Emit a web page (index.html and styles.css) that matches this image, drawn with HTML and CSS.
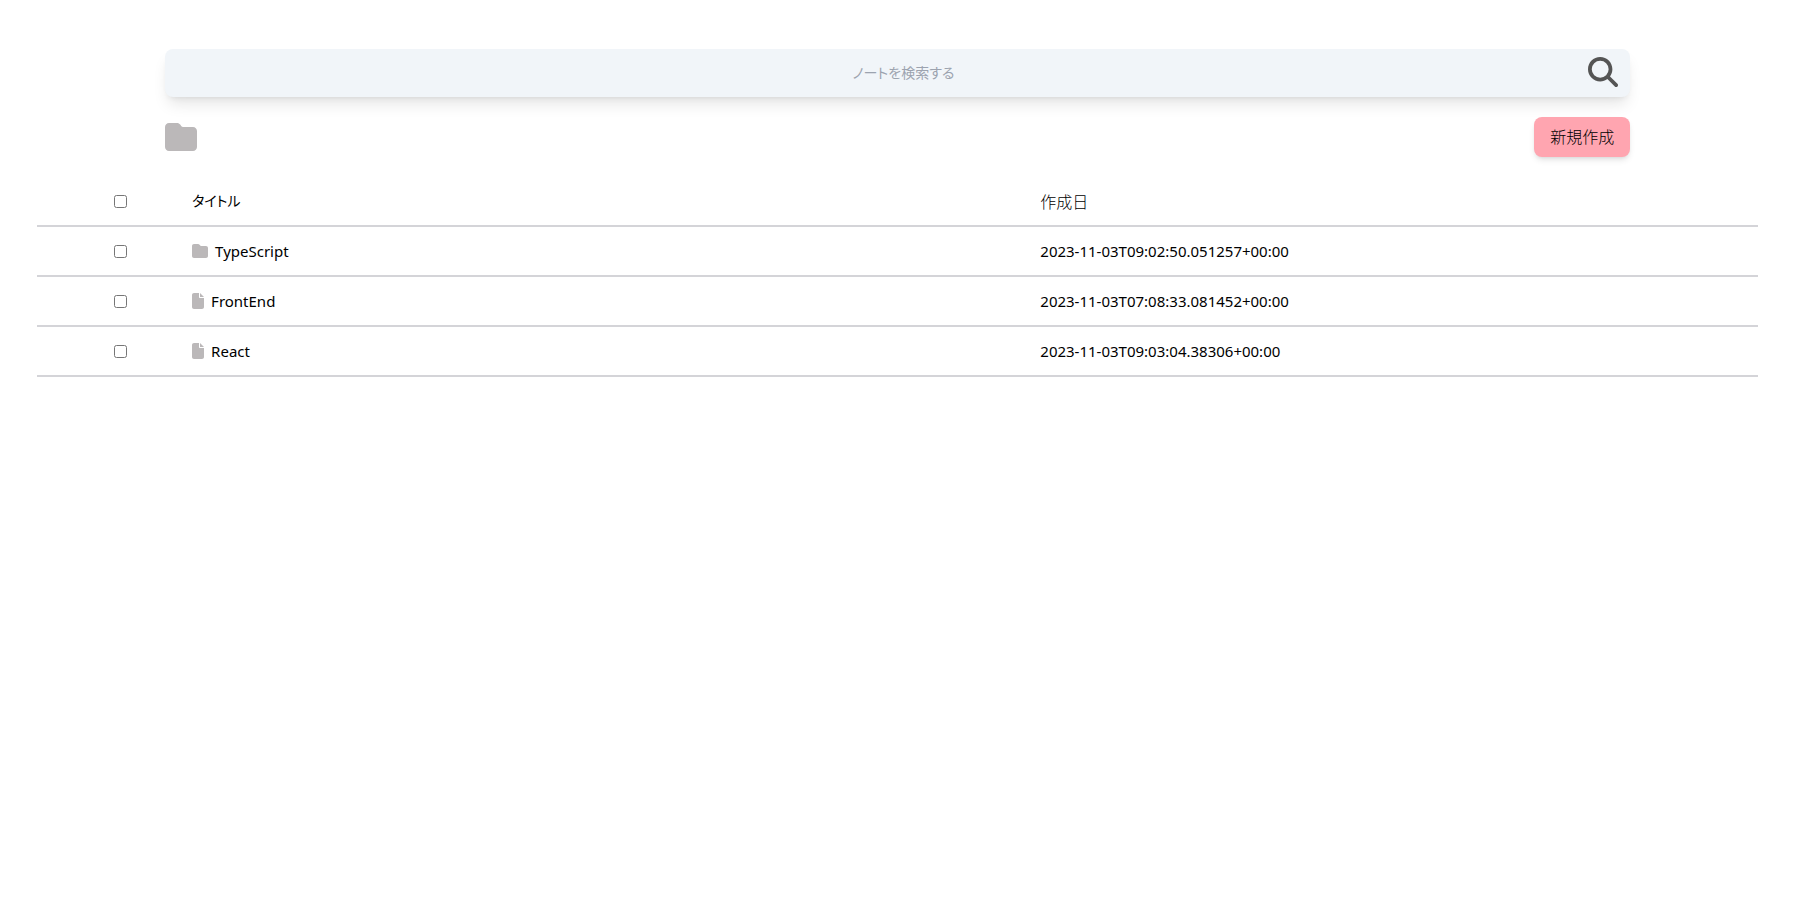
FILE: index.html
```html
<!DOCTYPE html>
<html lang="ja">
<head>
<meta charset="utf-8">
<title>ノート</title>
<link rel="stylesheet" href="styles.css">
</head>
<body>
<svg class="sprite" aria-hidden="true">
  <symbol id="folder" viewBox="0 0 512 512"><path d="M64 480H448c35.3 0 64-28.7 64-64V160c0-35.3-28.7-64-64-64H288c-10.1 0-19.6-4.7-25.6-12.8L243.2 57.6C231.1 41.5 212.1 32 192 32H64C28.7 32 0 60.7 0 96V416c0 35.3 28.7 64 64 64z"/></symbol>
  <symbol id="file" viewBox="0 0 384 512"><path d="M0 64C0 28.7 28.7 0 64 0H224V128c0 17.7 14.3 32 32 32H384V448c0 35.3-28.7 64-64 64H64c-35.3 0-64-28.7-64-64V64zm384 64H256V0L384 128z"/></symbol>
</svg>
<header class="top">
  <form class="search">
    <input class="search-input" type="text" placeholder="ノートを検索する" aria-label="ノートを検索する">
    <button class="search-button" type="button" aria-label="検索">
      <svg class="search-icon" viewBox="0 0 512 512"><path d="M416 208c0 45.9-14.9 88.3-40 122.7L502.6 457.4c12.5 12.5 12.5 32.8 0 45.3s-32.8 12.5-45.3 0L330.7 376c-34.4 25.2-76.8 40-122.7 40C93.1 416 0 322.9 0 208S93.1 0 208 0S416 93.1 416 208zM208 352a144 144 0 1 0 0-288 144 144 0 1 0 0 288z"/></svg>
    </button>
  </form>
  <div class="toolbar">
    <svg class="icon-large"><use href="#folder"/></svg>
    <button class="create" type="button">新規作成</button>
  </div>
</header>
<main>
  <table class="notes">
    <colgroup><col class="col-check"><col class="col-title"><col></colgroup>
    <thead>
      <tr>
        <th class="check"><input class="box" type="checkbox" aria-label="すべて選択"></th>
        <th class="kana">タイトル</th>
        <th class="kanji">作成日</th>
      </tr>
    </thead>
    <tbody>
      <tr>
        <td class="check"><input class="box" type="checkbox" id="n1"></td>
        <td><label class="name" for="n1"><svg class="icon-folder"><use href="#folder"/></svg>TypeScript</label></td>
        <td>2023-11-03T09:02:50.051257+00:00</td>
      </tr>
      <tr>
        <td class="check"><input class="box" type="checkbox" id="n2"></td>
        <td><label class="name" for="n2"><svg class="icon-file"><use href="#file"/></svg>FrontEnd</label></td>
        <td>2023-11-03T07:08:33.081452+00:00</td>
      </tr>
      <tr>
        <td class="check"><input class="box" type="checkbox" id="n3"></td>
        <td><label class="name" for="n3"><svg class="icon-file"><use href="#file"/></svg>React</label></td>
        <td>2023-11-03T09:03:04.38306+00:00</td>
      </tr>
    </tbody>
  </table>
</main>
</body>
</html>
```
FILE: styles.css
```css
* { box-sizing: border-box; }

body {
  margin: 0;
  background: #fff;
  color: #000;
  font-family: "Noto Sans", "Noto Sans CJK JP", sans-serif;
  font-size: 15px;
  line-height: 24px;
}

.sprite { display: none; }

.top {
  margin: 0 auto;
  padding-top: 49px;
  width: 81.65%;
}

.search {
  display: flex;
  align-items: center;
  height: 48px;
  padding: 0 12px;
  border-radius: 8px;
  background: #f1f5f9;
  box-shadow: 0 10px 15px -3px rgb(0 0 0 / 0.1), 0 4px 6px -4px rgb(0 0 0 / 0.1);
}

.search-input {
  flex: 1;
  min-width: 0;
  padding: 0 0 2px 42px;
  border: 0;
  background: transparent;
  outline: none;
  font: 14px/24px "Noto Sans CJK JP", sans-serif;
  font-feature-settings: "palt";
  text-align: center;
}

.search-input::placeholder { color: #9ca3af; }

.search-button {
  display: flex;
  padding: 0 0 2px;
  border: 0;
  background: none;
}

.search-icon {
  width: 30px;
  height: 30px;
  fill: #555;
}

.toolbar {
  display: flex;
  align-items: center;
  justify-content: space-between;
  margin-top: 20px;
}

.icon-large { width: 32px; height: 32px; fill: #bbb8b9; }

.create {
  padding: 7px 16px 9px;
  border: 0;
  border-radius: 8px;
  background: #ffa5b0;
  color: #000;
  font: 300 16px/24px "Noto Sans CJK JP", sans-serif;
  box-shadow: 0 4px 6px -1px rgb(0 0 0 / 0.1), 0 2px 4px -2px rgb(0 0 0 / 0.1);
}

.notes {
  width: 95.85%;
  margin: 20px auto 0;
  table-layout: fixed;
  border-collapse: separate;
  border-spacing: 0;
}

.col-check { width: 9%; }
.col-title { width: 49.3%; }

.notes th,
.notes td {
  height: 50px;
  padding: 0;
  border-bottom: 2px solid #d4d4d8;
  font-weight: 400;
  text-align: left;
  vertical-align: middle;
}

.notes .check { padding-left: 77px; }

.notes .kana {
  font-size: 14px;
  font-feature-settings: "palt";
}

.notes .kanji {
  font-size: 16px;
  font-weight: 300;
  font-family: "Noto Sans CJK JP", sans-serif;
}

.box {
  display: block;
  width: 13px;
  height: 13px;
  margin: 0;
}

.name {
  display: flex;
  align-items: center;
}

.icon-folder,
.icon-file {
  height: 16px;
  margin-right: 7px;
  fill: #bbb8b9;
}

.icon-folder { width: 16px; }
.icon-file { width: 12px; }
```
